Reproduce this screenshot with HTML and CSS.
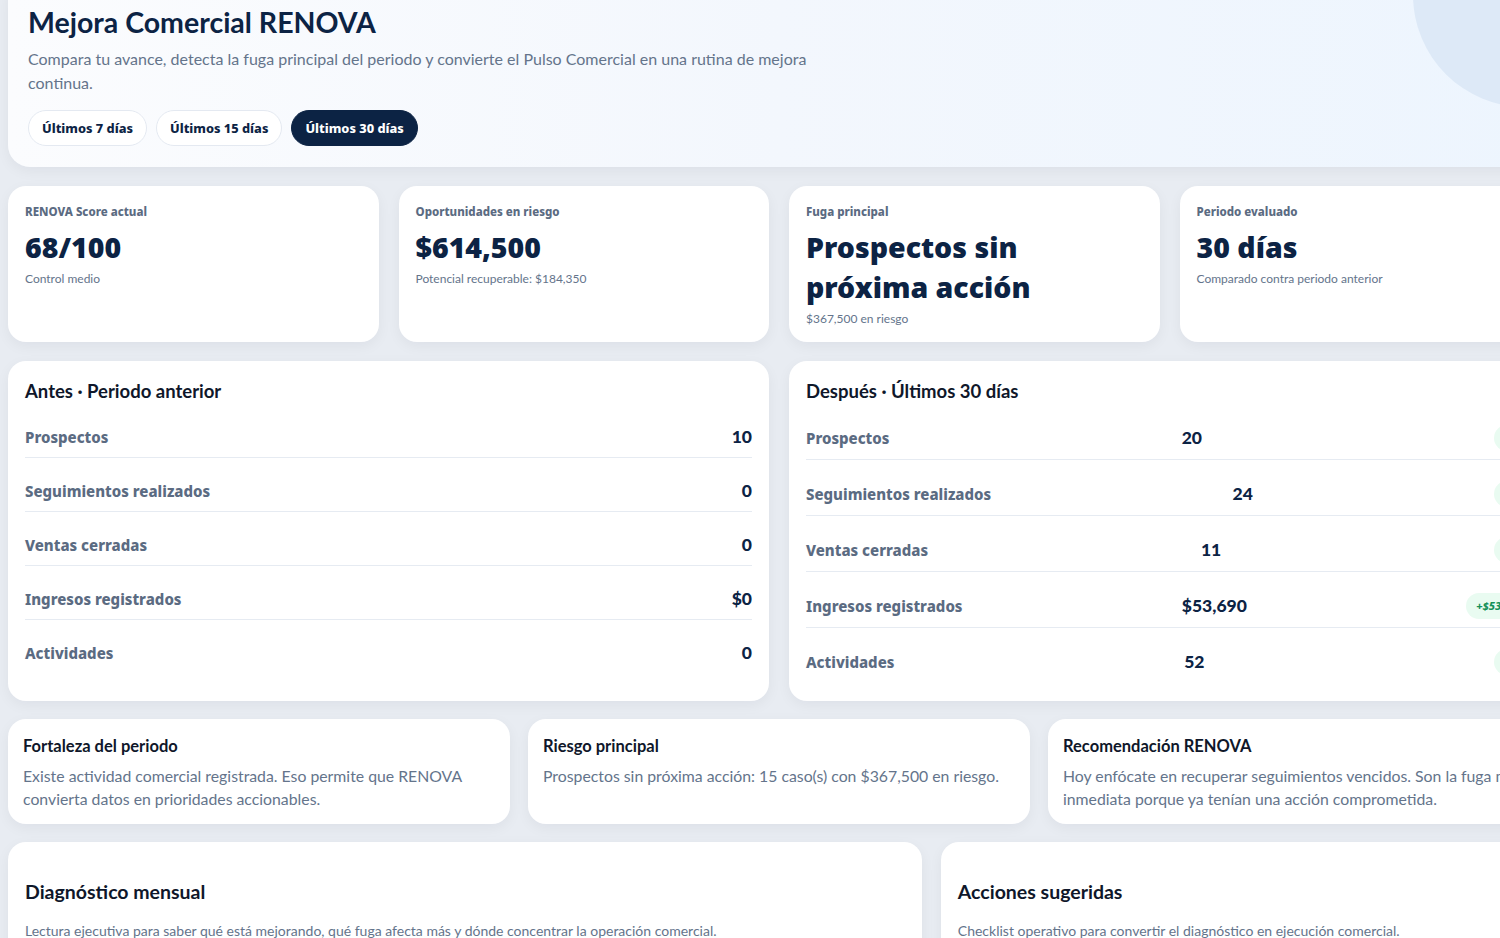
FILE: index.html
```html
<!DOCTYPE html>
<html lang="es">
<head>
  <meta charset="UTF-8" />
  <title>Mejora Comercial RENOVA</title>
  <meta name="viewport" content="width=device-width, initial-scale=1.0" />
  <link rel="stylesheet" href="styles.css">
</head>
<body>
  <div class="page">
    <header class="hero">
      <h1>Mejora Comercial RENOVA</h1>
      <p class="hero-sub">Compara tu avance, detecta la fuga principal del periodo y convierte el Pulso Comercial en una rutina de mejora continua.</p>
      <div class="pills">
        <button class="pill">Últimos 7 días</button>
        <button class="pill">Últimos 15 días</button>
        <button class="pill active">Últimos 30 días</button>
      </div>
    </header>

    <section class="stats">
      <div class="card stat">
        <div class="stat-label">RENOVA Score actual</div>
        <div class="stat-value">68/100</div>
        <div class="stat-sub">Control medio</div>
      </div>
      <div class="card stat">
        <div class="stat-label">Oportunidades en riesgo</div>
        <div class="stat-value">$614,500</div>
        <div class="stat-sub">Potencial recuperable: $184,350</div>
      </div>
      <div class="card stat">
        <div class="stat-label">Fuga principal</div>
        <div class="stat-value">Prospectos sin<br>próxima acción</div>
        <div class="stat-sub">$367,500 en riesgo</div>
      </div>
      <div class="card stat">
        <div class="stat-label">Periodo evaluado</div>
        <div class="stat-value">30 días</div>
        <div class="stat-sub">Comparado contra periodo anterior</div>
      </div>
    </section>

    <section class="compare">
      <div class="card compare-card">
        <h3>Antes · Periodo anterior</h3>
        <div class="row"><span class="row-label">Prospectos</span><span class="row-value">10</span></div>
        <div class="row"><span class="row-label">Seguimientos realizados</span><span class="row-value">0</span></div>
        <div class="row"><span class="row-label">Ventas cerradas</span><span class="row-value">0</span></div>
        <div class="row"><span class="row-label">Ingresos registrados</span><span class="row-value">$0</span></div>
        <div class="row last"><span class="row-label">Actividades</span><span class="row-value">0</span></div>
      </div>
      <div class="card compare-card after">
        <h3>Después · Últimos 30 días</h3>
        <div class="row"><span class="row-label">Prospectos</span><span class="row-value">20</span><span class="delta">+10</span></div>
        <div class="row"><span class="row-label">Seguimientos realizados</span><span class="row-value">24</span><span class="delta">+24</span></div>
        <div class="row"><span class="row-label">Ventas cerradas</span><span class="row-value">11</span><span class="delta">+11</span></div>
        <div class="row"><span class="row-label">Ingresos registrados</span><span class="row-value">$53,690</span><span class="delta">+$53,690</span></div>
        <div class="row last"><span class="row-label">Actividades</span><span class="row-value">52</span><span class="delta">+52</span></div>
      </div>
    </section>

    <section class="insights">
      <div class="card insight">
        <h4>Fortaleza del periodo</h4>
        <p>Existe actividad comercial registrada. Eso permite que RENOVA convierta datos en prioridades accionables.</p>
      </div>
      <div class="card insight">
        <h4>Riesgo principal</h4>
        <p>Prospectos sin próxima acción: 15 caso(s) con $367,500 en riesgo.</p>
      </div>
      <div class="card insight">
        <h4>Recomendación RENOVA</h4>
        <p>Hoy enfócate en recuperar seguimientos vencidos. Son la fuga más inmediata porque ya tenían una acción comprometida.</p>
      </div>
    </section>

    <section class="bottom">
      <div class="card panel">
        <h2>Diagnóstico mensual</h2>
        <p>Lectura ejecutiva para saber qué está mejorando, qué fuga afecta más y dónde concentrar la operación comercial.</p>
      </div>
      <div class="card panel">
        <h2>Acciones sugeridas</h2>
        <p>Checklist operativo para convertir el diagnóstico en ejecución comercial.</p>
      </div>
    </section>
  </div>
</body>
</html>
```

FILE: styles.css
```css
:root {
  --bg: #e8ecf2;
  --navy: #0c2344;
  --ink: #0f172a;
  --muted: #64748b;
  --label: #5b6b82;
  --line: #e6ebf2;
  --heavy: 'Noto Sans', Lato, sans-serif;
}

body {
  margin: 0;
  background: var(--bg);
  font-family: 'Segoe UI', Lato, 'Noto Sans', sans-serif;
  color: var(--ink);
  overflow-x: hidden;
}

.page {
  width: 1542px;
  margin: -22px 0 0 8px;
}

.card {
  background: #fff;
  border-radius: 18px;
  box-shadow: 0 4px 14px rgba(15, 23, 42, 0.05);
  box-sizing: border-box;
}

/* header */
.hero {
  position: relative;
  overflow: hidden;
  background: linear-gradient(90deg, #fbfcfe 0%, #f3f7fd 50%, #edf5fe 100%);
  border-radius: 22px;
  padding: 26px 20px 21px;
  margin-bottom: 19px;
  box-shadow: 0 4px 14px rgba(15, 23, 42, 0.05);
}

.hero::after {
  content: "";
  position: absolute;
  width: 224px;
  height: 224px;
  border-radius: 50%;
  background: #dde9f7;
  right: -87px;
  top: -95px;
}

.hero h1 {
  margin: 0;
  font-size: 28.5px;
  line-height: 36px;
  font-weight: 700;
  color: var(--navy);
}

.hero-sub {
  margin: 7px 0 0;
  max-width: 800px;
  font-size: 16px;
  line-height: 24px;
  color: var(--muted);
}

.pills {
  display: flex;
  gap: 9px;
  margin-top: 15px;
}

.pill {
  font-family: var(--heavy);
  font-size: 12.8px;
  font-weight: 800;
  color: var(--navy);
  background: #fff;
  border: 1px solid #e4e9f1;
  border-radius: 18px;
  height: 36px;
  padding: 0 13px;
}

.pill.active {
  background: #0c2344;
  border-color: #0c2344;
  color: #fff;
}

/* stats */
.stats {
  display: grid;
  grid-template-columns: repeat(4, 1fr);
  gap: 20px;
  margin-bottom: 19px;
}

.stat {
  height: 156px;
  padding: 18px 17px;
}

.stat-label {
  font-family: var(--heavy);
  font-size: 11.5px;
  line-height: 16px;
  font-weight: 800;
  color: var(--label);
}

.stat-value {
  margin-top: 7px;
  font-family: var(--heavy);
  font-size: 28.5px;
  line-height: 40px;
  font-weight: 900;
  color: var(--navy);
}

.stat-sub {
  margin-top: 4px;
  font-size: 12px;
  line-height: 16px;
  color: var(--muted);
}

/* before / after */
.compare {
  display: grid;
  grid-template-columns: 1fr 1fr;
  gap: 20px;
  margin-bottom: 18px;
}

.compare-card {
  padding: 18px 17px 18px;
}

.compare-card h3 {
  margin: 0 0 1px;
  font-size: 18.5px;
  line-height: 24px;
  font-weight: 700;
  color: var(--ink);
}

.row {
  display: flex;
  justify-content: space-between;
  align-items: center;
  padding: 21px 0 8px;
  line-height: 24px;
  border-bottom: 1px solid var(--line);
}

.row.last {
  border-bottom: none;
}

.row-label {
  font-family: var(--heavy);
  font-size: 15px;
  font-weight: 800;
  color: var(--label);
}

.row-value {
  font-size: 17.5px;
  font-weight: 900;
  color: var(--navy);
}

.delta {
  font-family: var(--heavy);
  background: #e9fbf1;
  color: #15915a;
  font-size: 11px;
  font-weight: 800;
  font-style: italic;
  line-height: 26px;
  padding: 0 10px;
  border-radius: 14px;
}

/* insights */
.insights {
  display: grid;
  grid-template-columns: repeat(3, 1fr);
  gap: 18px;
  margin-bottom: 18px;
}

.insight {
  padding: 16px 15px 14px;
}

.insight h4 {
  margin: 0 0 7px;
  font-size: 16.5px;
  line-height: 22px;
  font-weight: 700;
  color: var(--ink);
}

.insight p {
  margin: 0;
  font-size: 15.8px;
  line-height: 23px;
  color: var(--muted);
}

/* bottom panels */
.bottom {
  display: grid;
  grid-template-columns: 3fr 2fr;
  gap: 19px;
}

.panel {
  min-height: 220px;
  padding: 37px 17px 20px;
}

.panel h2 {
  margin: 0;
  font-size: 19.5px;
  line-height: 26px;
  font-weight: 700;
  color: var(--ink);
}

.panel p {
  margin: 17px 0 0;
  font-size: 14px;
  line-height: 18px;
  color: var(--muted);
}
```
